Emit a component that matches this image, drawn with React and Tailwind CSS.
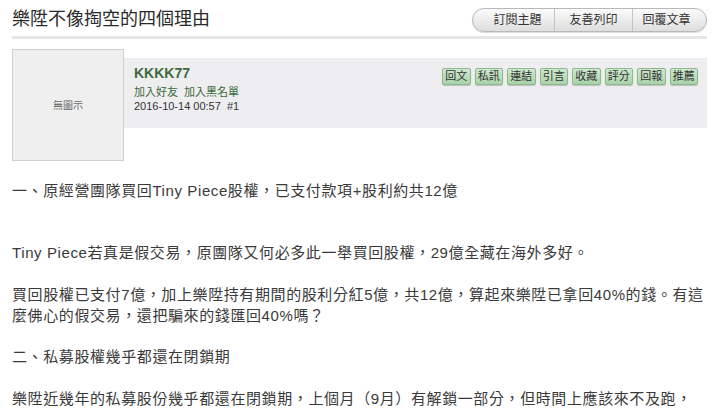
import React from 'react';

const actions = ['回文', '私訊', '連結', '引言', '收藏', '評分', '回報', '推薦'];
const topButtons = ['訂閱主題', '友善列印', '回覆文章'];

export default function App() {
    return (
        <div className="w-[720px] h-[409px] overflow-hidden bg-white text-[#333] font-['Liberation_Sans','Noto_Sans_CJK_TC',sans-serif]">
            {/* Title bar */}
            <div className="px-3">
                <div className="flex items-center justify-between h-[36px] pr-[1px]">
                    <h1 className="text-[18px] leading-none text-[#2a2a2a] pt-[2px]">樂陞不像掏空的四個理由</h1>
                    <div className="flex h-[24px] mt-[3px] rounded-full border border-[#b9b9b9] overflow-hidden bg-gradient-to-b from-[#fbfbfb] to-[#dedede] shadow-[0_1px_1px_rgba(0,0,0,0.15)]">
                        {topButtons.map((b, i) => (
                            <span
                                key={b}
                                className={
                                    'flex items-center justify-center text-[12px] text-[#333] ' +
                                    (i === 0 ? 'w-[81px] pl-[8px] ' : i === 1 ? 'w-[78px] border-l border-[#c4c4c4] ' : 'w-[74px] pr-[6px] border-l border-[#c4c4c4] ')
                                }
                            >
                                {b}
                            </span>
                        ))}
                    </div>
                </div>
                <div className="h-[3px] bg-[#e6e6e6] mr-[1px]" />
            </div>

            {/* Post header */}
            <div className="flex px-3 mt-[10px] pr-[13px]">
                <div className="w-[112px] h-[112px] shrink-0 border border-[#cfcfcf] bg-[#efeff0] flex items-center justify-center text-[10px] text-[#666]">
                    無圖示
                </div>
                <div className="flex-1 h-[70px] mt-[9px] bg-[#eeeef0] flex justify-between pl-[10px] pr-[9px]">
                    <div className="pt-[6px]">
                        <div className="text-[14px] font-bold text-[#3c6a3c] leading-[18px]">KKKK77</div>
                        <div className="text-[11px] text-[#3c6a3c] leading-[14px] mt-[3px]">加入好友&nbsp;&nbsp;加入黑名單</div>
                        <div className="text-[11px] text-[#333] leading-[14px]">2016-10-14 00:57&nbsp;&nbsp;#1</div>
                    </div>
                    <div className="flex gap-[4px] pt-[10px] h-fit">
                        {actions.map((a) => (
                            <span
                                key={a}
                                className="w-[28.5px] h-[17px] flex items-center justify-center text-[11px] text-[#333] rounded-[2px] border border-[#8db98d] bg-gradient-to-b from-[#cfe8cf] to-[#a9d2a9] shadow-[0_1px_1px_rgba(0,0,0,0.2)]"
                            >
                                {a}
                            </span>
                        ))}
                    </div>
                </div>
            </div>

            {/* Body */}
            <div className="px-3 mt-[20px] text-[15px] leading-[20.8px] tracking-[0.6px] whitespace-nowrap text-[#3a3a3a]">
                <div>一、原經營團隊買回Tiny Piece股權，已支付款項+股利約共12億</div>
                <div>&nbsp;</div>
                <div>&nbsp;</div>
                <div>Tiny Piece若真是假交易，原團隊又何必多此一舉買回股權，29億全藏在海外多好。</div>
                <div>&nbsp;</div>
                <div>買回股權已支付7億，加上樂陞持有期間的股利分紅5億，共12億，算起來樂陞已拿回40%的錢。有這</div>
                <div>麼佛心的假交易，還把騙來的錢匯回40%嗎？</div>
                <div>&nbsp;</div>
                <div>二、私募股權幾乎都還在閉鎖期</div>
                <div>&nbsp;</div>
                <div>樂陞近幾年的私募股份幾乎都還在閉鎖期，上個月（9月）有解鎖一部分，但時間上應該來不及跑，</div>
            </div>
        </div>
    );
}
